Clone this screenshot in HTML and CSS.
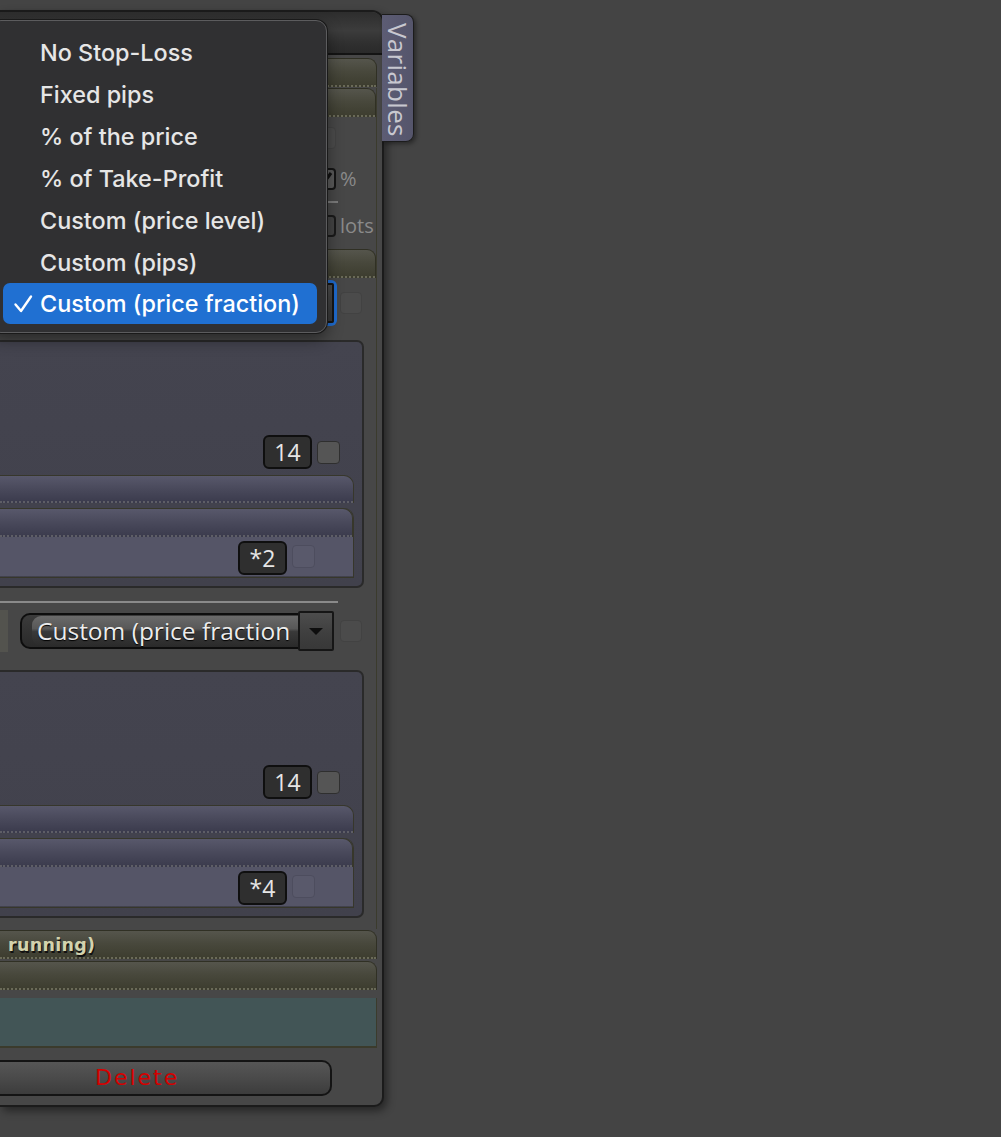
FILE: index.html
```html
<!DOCTYPE html>
<html>
<head>
<meta charset="utf-8">
<title>Stop-Loss settings</title>
<link rel="stylesheet" href="styles.css">
</head>
<body>
<div class="panel">
  <div class="titlebar"></div>
  <div class="inner">
    <div class="hdr olive"></div>
    <div class="group">
      <div class="hdr olive"></div>
      <div class="opts">
        <div class="opt-row"><span class="cb cb-faint"></span><span class="unit"></span></div>
        <div class="opt-row"><span class="cb cb-checked"><svg viewBox="0 0 22 22" width="22" height="22"><path d="M5 11 L9 16 L17 5" fill="none" stroke="#111" stroke-width="3"/></svg></span><span class="unit">%</span></div>
        <div class="opt-sep"></div>
        <div class="opt-row"><span class="cb cb-dark"></span><span class="unit">lots</span></div>
      </div>
      <div class="hdr olive hdr-gap"></div>
      <div class="select-row row-focus">
        <span class="stub"></span>
        <div class="select focused"><span class="select-text"></span><span class="select-btn"><span class="tri"></span></span></div>
        <span class="cb cb-faint"></span>
      </div>
      <div class="lav-box">
        <div class="badge-row"><span class="badge">14</span><span class="cb cb-solid"></span></div>
        <div class="lav-hdr"></div>
        <div class="lav-group">
          <div class="lav-hdr lav-hdr-in"></div>
          <div class="lav-content"><span class="badge">*2</span><span class="cb cb-lav"></span></div>
        </div>
      </div>
      <div class="hline"></div>
      <div class="select-row row-plain">
        <span class="stub"></span>
        <div class="select"><span class="select-text"><span class="gloss"></span><span class="select-label">Custom (price fraction</span></span><span class="select-btn"><span class="tri"></span></span></div>
        <span class="cb cb-faint"></span>
      </div>
      <div class="lav-box box2">
        <div class="badge-row"><span class="badge">14</span><span class="cb cb-solid"></span></div>
        <div class="lav-hdr"></div>
        <div class="lav-group">
          <div class="lav-hdr lav-hdr-in"></div>
          <div class="lav-content"><span class="badge">*4</span><span class="cb cb-lav"></span></div>
        </div>
      </div>
    </div>
    <div class="hdr olive running"><span class="hdr-title">running)</span></div>
    <div class="hdr olive hdr-after"></div>
    <div class="teal"></div>
    <div class="delete"><span>Delete</span></div>
  </div>
  <div class="tab"><span>Variables</span></div>
</div>

<div class="menu">
  <div class="item">No Stop-Loss</div>
  <div class="item">Fixed pips</div>
  <div class="item">% of the price</div>
  <div class="item">% of Take-Profit</div>
  <div class="item">Custom (price level)</div>
  <div class="item">Custom (pips)</div>
  <div class="item selected"><svg class="check" viewBox="0 0 20 20" width="20" height="20"><path d="M2.5 10.5 L8 17 L18 2.5" fill="none" stroke="#fff" stroke-width="2.4" stroke-linecap="round" stroke-linejoin="round"/></svg>Custom (price fraction)</div>
</div>
</body>
</html>
```

FILE: styles.css
```css
* { box-sizing: border-box; }
html, body { margin: 0; padding: 0; }
body {
  background: #444444;
  width: 1001px;
  height: 1137px;
  overflow: hidden;
  position: relative;
  font-family: "Open Sans", "Noto Sans", sans-serif;
}

.panel {
  position: relative;
  margin-top: 10px;
  width: 384px;
  height: 1097px;
  background: #474747;
  border: 2px solid #1b1b1b;
  border-left: none;
  border-radius: 0 12px 10px 0;
  box-shadow: 3px 4px 8px rgba(0,0,0,0.45);
}

.titlebar {
  height: 43px;
  background: linear-gradient(#2d2d2d, #3c3c3c 45%, #303030 75%, #2a2a2a);
  border-bottom: 2px solid #141414;
  border-top-right-radius: 10px;
}

.inner {
  padding: 3px 5px 0 0;
}

.hdr {
  height: 29px;
  border: 1px solid #303024;
  border-left: none;
  border-bottom: none;
  border-top-right-radius: 9px;
  position: relative;
}
.olive {
  background: linear-gradient(#55554c, #48483c 45%, #3c3c2e);
}
.hdr::after {
  content: "";
  position: absolute;
  left: 0; right: 0; bottom: 0;
  border-bottom: 2px dotted #6a6a58;
}

.group {
  margin-top: 1px;
  height: 841px;
  border-right: 1px solid #3b3b2d;
}

.opts {
  height: 128px;
  padding-top: 11px;
}
.opt-row {
  height: 20px;
  display: flex;
  justify-content: flex-end;
  align-items: center;
}
.opt-row + .opt-row { margin-top: 20px; }
.opt-row:nth-child(2) { height: 22px; }
.opt-row:last-child { margin-top: 12px; height: 22px; }
.opt-sep {
  margin: 11px 38px 0 180px;
  height: 2px;
  background: #7b7b7b;
}
.unit {
  width: 40px;
  padding-left: 4px;
  color: #8a8a8a;
  font-size: 20px;
  line-height: 22px;
}

.cb {
  display: inline-block;
  width: 23px;
  height: 23px;
  border-radius: 4px;
  flex: none;
}
.cb-faint { background: #4b4b4b; border: 1px solid #424242; width: 22px; height: 22px; }
.cb-checked { background: #5a5a5a; border: 2px solid #151515; width: 22px; height: 22px; }
.cb-checked svg { display: block; margin: -2px; }
.cb-dark { background: #444; border: 2px solid #1a1a1a; width: 22px; height: 22px; }
.cb-solid { background: #555555; border: 1.5px solid #2f2f2f; }
.cb-lav { background: #59596b; border: 1px solid #4d4d5e; }

.hdr-gap { margin-top: 4px; }

.select-row {
  height: 40px;
  display: flex;
  align-items: center;
}
.row-focus { margin-top: 5px; }
.row-plain { margin-top: 8px; }
.stub {
  width: 8px;
  height: 42px;
  background: #53534e;
  flex: none;
}
.select {
  margin-left: 12px;
  width: 314px;
  height: 40px;
  display: flex;
  align-items: center;
  border-radius: 10px 3px 3px 10px;
}
.select.focused { box-shadow: 0 0 0 3px #1f6cd0; }
.select-text {
  flex: 1;
  height: 36px;
  white-space: nowrap;
  border: 2px solid #0d0d0d;
  border-right: none;
  border-radius: 10px 0 0 10px;
  background: linear-gradient(#3b3b3b, #2a2a2a);
  color: #ececec;
  font-size: 24.5px;
  line-height: 32px;
  padding-left: 15px;
  text-shadow: 0 1px 1px #000;
  position: relative;
  z-index: 0;
  isolation: isolate;
}
.gloss {
  position: absolute;
  left: 10px;
  right: 0;
  top: 1px;
  bottom: 1px;
  border-radius: 9px 0 0 9px;
  background: linear-gradient(#6a6a6a, #585858 42%, #393939 52%, #2b2b2b 100%);
  z-index: -1;
}
.select-btn {
  width: 36px;
  height: 40px;
  background: linear-gradient(#4d4d4d, #3f3f3f 55%, #383838);
  border: 2px solid #161616;
  border-radius: 2px;
  display: flex;
  align-items: center;
  justify-content: center;
}
.tri {
  width: 0; height: 0;
  border-left: 7px solid transparent;
  border-right: 7px solid transparent;
  border-top: 7px solid #0e0e0e;
}
.select-row .cb-faint { margin-left: 6px; }

.lav-box {
  margin-top: 17px;
  margin-right: 12px;
  height: 248px;
  background: linear-gradient(#44444f, #41414c);
  border: 2px solid #2a2a2a;
  border-left: none;
  border-radius: 0 7px 7px 0;
  padding-top: 93px;
}
.box2 { margin-top: 19px; }
.badge-row {
  height: 34px;
  display: flex;
  justify-content: flex-end;
  align-items: center;
  padding-right: 22px;
  gap: 5px;
}
.badge {
  width: 49px;
  height: 34px;
  background: #2f2f2f;
  border: 2px solid #0f0f0f;
  border-radius: 6px;
  color: #e6e6e6;
  font-size: 23px;
  line-height: 30px;
  text-align: center;
}
.lav-hdr {
  margin-top: 6px;
  margin-right: 8px;
  height: 28px;
  border: 1.5px solid #37372b;
  border-left: none;
  border-bottom: none;
  border-top-right-radius: 10px;
  background: linear-gradient(#58586b, #4a4a5c 45%, #3a3a4c);
  position: relative;
}
.lav-hdr::after {
  content: "";
  position: absolute;
  left: 0; right: 0; bottom: 0;
  border-bottom: 2px dotted #5e5e66;
}
.lav-group {
  margin-top: 5px;
  margin-right: 8px;
  height: 70px;
  border: 1.5px solid #37372b;
  border-left: none;
  border-top: none;
  border-top-right-radius: 10px;
}
.lav-hdr-in {
  margin: 0;
  height: 29px;
}
.lav-content {
  height: 39px;
  background: #555567;
  display: flex;
  justify-content: flex-end;
  align-items: center;
  gap: 5px;
  padding-right: 38px;
}
.lav-content .badge { height: 34px; margin-top: 2px; }

.hline {
  margin-top: 13px;
  margin-right: 38px;
  height: 2px;
  background: #8a8a8a;
}

.running { margin-top: 1px; }
.hdr-title {
  display: block;
  padding-left: 8px;
  font-family: "DejaVu Sans", sans-serif;
  font-weight: bold;
  font-size: 17.5px;
  line-height: 28px;
  color: #d3d3ae;
  text-shadow: 1px 2px 0 #111;
  letter-spacing: 0.3px;
}
.hdr-after { margin-top: 2px; }

.teal {
  margin-top: 8px;
  height: 50px;
  background: #425556;
  border-right: 1px solid #3b3b2c;
  border-bottom: 2px solid #3b3b2c;
}

.delete {
  margin-top: 12px;
  width: 332px;
  height: 36px;
  border: 2px solid #141414;
  border-left: none;
  border-radius: 0 10px 10px 0;
  background: linear-gradient(#565656, #4a4a4a 50%, #3c3c3c);
  padding-left: 95px;
  color: #d40000;
  font-family: "DejaVu Sans", sans-serif;
  font-size: 22px;
  line-height: 32px;
  letter-spacing: 2px;
}

.tab {
  position: absolute;
  left: 382px;
  top: 2px;
  width: 32px;
  height: 128px;
  background: linear-gradient(90deg, #5c5c74, #55556b);
  border: 1.5px solid #1c1c1c;
  border-left: none;
  border-radius: 0 8px 8px 0;
  box-shadow: 2px 2px 4px rgba(0,0,0,0.4);
  display: flex;
  justify-content: center;
  padding-top: 8px;
}
.tab span {
  writing-mode: vertical-rl;
  color: #c8c8d0;
  font-size: 26px;
  line-height: 28px;
  letter-spacing: 0.3px;
}

.menu {
  position: absolute;
  left: -10px;
  top: 20px;
  width: 337px;
  height: 313px;
  background: #303032;
  border: 1px solid #5c5c5e;
  border-radius: 11px;
  box-shadow: 0 0 0 1px #1a1a1a, 0 6px 16px rgba(0,0,0,0.45);
  padding: 10px 9px 0 12px;
  font-family: Inter, "Noto Sans", sans-serif;
}
.item {
  height: 42px;
  padding-left: 37px;
  display: flex;
  align-items: center;
  color: #e6e6e6;
  font-size: 23.4px;
  font-weight: 500;
  letter-spacing: 0;
  position: relative;
}
.item.selected {
  background: #2070d2;
  border-radius: 7px;
  color: #ffffff;
  height: 41px;
}
.check {
  position: absolute;
  left: 10px;
  top: 11px;
}
```
